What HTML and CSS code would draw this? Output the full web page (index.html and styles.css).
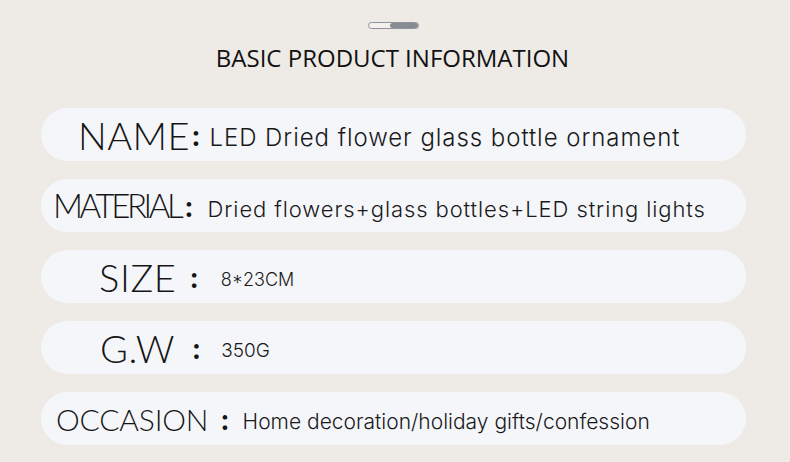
FILE: index.html
```html
<!DOCTYPE html>
<html>
<head>
<meta charset="utf-8">
<link rel="stylesheet" href="styles.css">
</head>
<body>
<div class="page">
  <div class="slider"><span class="slider-knob"></span></div>
  <h1 class="title">BASIC PRODUCT INFORMATION</h1>
  <div class="rows">
    <div class="row row-name">
      <span class="label">NAME</span><span class="colon">:</span><span class="value">LED Dried flower glass bottle ornament</span>
    </div>
    <div class="row row-material">
      <span class="label">MATERIAL</span><span class="colon">:</span><span class="value">Dried flowers+glass bottles+LED string lights</span>
    </div>
    <div class="row row-size">
      <span class="label">SIZE</span><span class="colon">:</span><span class="value">8*23CM</span>
    </div>
    <div class="row row-gw">
      <span class="label">G.W</span><span class="colon">:</span><span class="value">350G</span>
    </div>
    <div class="row row-occasion">
      <span class="label">OCCASION</span><span class="colon">:</span><span class="value">Home decoration/holiday gifts/confession</span>
    </div>
  </div>
</div>
</body>
</html>
```
FILE: styles.css
```css
html, body {
  margin: 0;
  padding: 0;
  background: #eeeae5;
}
.page {
  width: 790px;
  height: 462px;
  overflow: hidden;
  padding-top: 22px;
  box-sizing: border-box;
  font-family: Lato, "Open Sans", sans-serif;
  color: #161616;
}
.slider {
  width: 49px;
  height: 5px;
  margin: 0 0 0 368px;
  border: 1px solid #8f949b;
  border-radius: 4px;
  background: #f3f1ee;
  display: flex;
  justify-content: flex-end;
}
.slider-knob {
  width: 28px;
  height: 5px;
  border-radius: 3px;
  background: #878c94;
}
.title {
  margin: 14px 0 0 0;
  text-align: center;
  padding-right: 5px;
  font-family: "Open Sans", sans-serif;
  font-weight: 400;
  font-size: 24px;
  line-height: 30px;
  letter-spacing: 0;
  color: #121212;
}
.rows {
  margin: 35px 0 0 41px;
  width: 705px;
  display: flex;
  flex-direction: column;
  gap: 18px;
}
.row {
  height: 53px;
  border-radius: 27px;
  background: #f5f6fa;
  display: flex;
  align-items: center;
}
.label {
  font-weight: 300;
  font-size: 38px;
  line-height: 1;
  color: #151515;
}
.colon {
  font-weight: 900;
  font-size: 28px;
  line-height: 1;
  color: #151515;
}
.value {
  font-family: Inter, Lato, sans-serif;
  font-weight: 300;
  font-size: 24px;
  line-height: 1;
  margin-top: 6px;
  color: #1a1a1a;
}
.row-name .label { margin-left: 37px; letter-spacing: 0.5px; }
.row-name .colon { margin-left: 2px; }
.row-name .value { margin-left: 10px; letter-spacing: 0.95px; }

.row-material .label { margin-left: 12px; font-size: 33px; letter-spacing: -3.4px; }
.row-material .colon { margin-left: 5px; }
.row-material .value { margin-left: 15px; font-size: 22px; letter-spacing: 0.9px; }

.row-size .label { margin-left: 58px; letter-spacing: 0.6px; }
.row-size .colon { margin-left: 14px; }
.row-size .value { margin-left: 23px; font-size: 18px; letter-spacing: 0; }

.row-gw .label { margin-left: 59px; letter-spacing: 0.5px; }
.row-gw .colon { margin-left: 18px; }
.row-gw .value { margin-left: 21px; font-size: 19px; letter-spacing: 0; }

.row-occasion .label { margin-left: 15px; font-size: 30px; letter-spacing: -0.2px; }
.row-occasion .colon { margin-left: 13px; }
.row-occasion .value { margin-left: 14px; font-size: 21px; letter-spacing: 0; }
```
